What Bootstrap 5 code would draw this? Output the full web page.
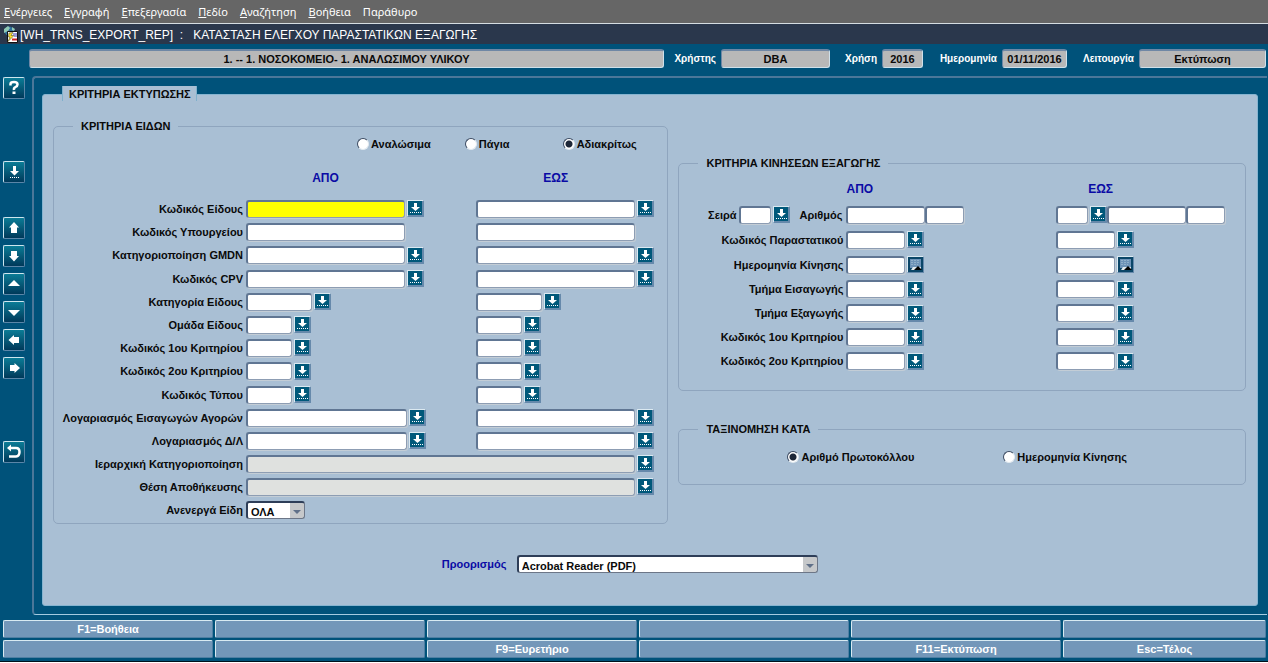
<!DOCTYPE html>
<html lang="el">
<head>
<meta charset="utf-8">
<meta name="viewport" content="width=device-width, initial-scale=1">
<title>[WH_TRNS_EXPORT_REP] : ΚΑΤΑΣΤΑΣΗ ΕΛΕΓΧΟΥ ΠΑΡΑΣΤΑΤΙΚΩΝ ΕΞΑΓΩΓΗΣ</title>
<link rel="stylesheet" href="https://cdn.jsdelivr.net/npm/bootstrap@5.3.0/dist/css/bootstrap.min.css">
<style>
:root { --sea: #00527a; --pane: #a9bfd4; --line: #8fa5be; --edge: #607693; --navy: #0a0aa5; }
body { font: bold 11px/16px "Liberation Sans", Arial, sans-serif; color: #0a0a0a; background: var(--sea); border-bottom: 1px solid #fff; }
.menu-strip { background: #666; border-bottom: 1px solid #d5dde2; height: 24px; padding-left: 4px; gap: 12px; font: 11px/24px "Noto Sans", sans-serif; }
.menu-strip a { color: #fff; text-decoration: none; }
.title-strip { background: #2a374c; color: #fff; height: 20px; padding: 2px 0 0 4px; white-space: pre; }
.title-strip h1 { font-size: 12px; line-height: 18px; }
.info-strip { padding: 5px 2px 8px 29px; }
.info-strip label { color: #fff; font-size: 10px; text-align: right; flex: none; padding-right: 5px; }
.info-strip input { height: 19px; min-width: 0; border: 1px solid #6f87a5; border-top-width: 2px; border-right-color: #cfe0ea; border-bottom-color: #cfe0ea; border-radius: 3px; background: #b8b8b8; color: #0a0a0a; font: inherit; text-align: center; padding: 0; }
.lw-user { width: 57px; } .lw-year { width: 52px; } .lw-date { width: 79px; } .lw-mode { width: 72px; }
.fw-date { width: 65px; } .fw-year { width: 41px; } .fw-user { width: 109px; } .fw-mode { width: 127px; }

.rail { width: 32px; flex: none; padding: 1px 0 0 3px; gap: 6px; }
.tool { width: 22px; height: 22px; padding: 0; border: 1px solid #cde6ee; border-right-color: #5b86a8; border-bottom-color: #5b86a8; border-radius: 2px; background: linear-gradient(#0b7c96, #00395a); display: block; }
.tool svg, .pick svg { display: block; }
.gap-2slot { margin-bottom: 56px; } .gap-1slot { margin-bottom: 28px; }

.frame { border: 2px solid #4b7799; border-right: 0; border-bottom-color: #a5cbe0; border-bottom-width: 1px; border-radius: 4px 0 0 4px; padding: 8px 9px 8px 8px; margin-right: 1px; }
.tab-cap { position: relative; z-index: 1; align-self: flex-start; margin: 0 0 -7px 20px; padding: 0 5px 0 6px; height: 15px; line-height: 16px; background: var(--pane); border: solid #7fb0cc; border-width: 0 1px; }
.sheet { background: var(--pane); border: 1px solid #86b4d0; border-radius: 3px; padding: 23px 11px 24px 10px; }
.sheet-cols { display: grid; grid-template-columns: 616fr 568fr; gap: 10px; align-items: start; }
fieldset { border: 1px solid var(--line); border-radius: 5px; }
legend { float: none; width: auto; margin: 0 0 0 19px; padding: 0 8px; font-size: 11px; line-height: 16px; height: 16px; }
.items { padding-bottom: 2px; }
.right-col { padding-top: 37px; }
.crit { padding-bottom: 17px; }
.sorting { margin-top: 30px; }
.heads { font-size: 12px; line-height: 20px; color: var(--navy); text-align: center; }
.tl { display: grid; grid-template-columns: 192px 230fr 191fr; align-items: center; height: 23px; }
.tr { display: grid; grid-template-columns: 167px 210fr 189fr; align-items: center; height: 24px; }
.tall { height: 24px; } .tr.tall { height: 25px; }
.tl > label, .tr > label { text-align: right; padding-right: 3px; white-space: nowrap; }
.cap { width: 159px; text-align: center; }
.cap-s { width: 24px; margin-left: 0; }
.left-heads { margin: 14px 0 9px; height: 20px; }
.right-heads { margin: 8px 0 3px; height: 20px; }
.span-both { grid-column: 2 / 4; padding-right: 13px; }
.cell { display: flex; align-items: center; gap: 2px; }
.tight { gap: 0; } .tight .pick { margin-left: 2px; }
.fld { height: 18px; flex: none; min-width: 0; padding: 0 2px; border: 1px solid #8d9db3; border-top: 2px solid var(--edge); border-left: 2px solid var(--edge); border-radius: 3px; background: #fff; box-shadow: 1px 1px 0 #c3cdd6; font: inherit; outline: 0; }
.fld.hot { background: #ff0; }
.fld.off { background: #dfe1df; flex: 1; }
.w-xl { width: 159px; } .w-xxl { width: 161px; } .w-m { width: 66px; } .w-s { width: 46px; } .w-c { width: 59px; } .w-n { width: 79px; } .w-i { width: 39px; } .w-ser { width: 32px; }
.pick { width: 17px; height: 17px; flex: none; padding: 0; border: 1px solid #dbe9f1; border-right-color: #6689ab; border-bottom-color: #6689ab; border-radius: 1px; background: #00587a; }
.combo { appearance: none; height: 18px; border: 1px solid #6c7687; border-top: 2px solid #2e3e58; border-left: 2px solid #2e3e58; border-radius: 3px; padding: 3px 14px 0 3px; font: inherit; line-height: 12px; color: #0a0a0a; overflow: hidden;
  background: #fff url("data:image/svg+xml,%3Csvg xmlns='http://www.w3.org/2000/svg' width='14' height='16'%3E%3Crect width='14' height='16' fill='%23c6c8ca'/%3E%3Cpath d='M3 7h8l-4 4z' fill='%23607088'/%3E%3C/svg%3E") no-repeat right top; }
.w-all { width: 59px; } .w-dest { width: 301px; }
.opts { height: 20px; }
.opts label { display: flex; align-items: center; gap: 2px; }
.opts input { appearance: none; width: 12px; height: 12px; margin: 0; border: 1px solid #3b4a61; border-right-color: #e3eaf0; border-bottom-color: #e3eaf0; border-radius: 50%; background: #fff; }
.opts input:checked { background: radial-gradient(circle, #1d2738 0 3px, #fff 4px); }
.kind-opts { display: grid; grid-template-columns: 108fr 98fr 105fr; padding-left: 303px; }
.sort-opts { display: grid; grid-template-columns: 216fr 242fr; padding-left: 108px; margin-top: 10px; }
.dest { padding-left: calc(33% - 5px); margin-top: 31px; }
.dest label { color: var(--navy); width: 75px; }

.keys { display: grid; grid-template-columns: repeat(5, 210fr) 203fr; gap: 2px; padding: 5px 2px 3px 3px; border-bottom: 1px solid #00111c; }
.keys button { height: 18px; padding: 0; border: 1px solid #d8eaf2; border-right-color: #4f7fa3; border-bottom-color: #4f7fa3; border-radius: 2px; background: #7397b9; color: #fff; font: inherit; line-height: 16px; }
</style>
<script src="https://cdn.jsdelivr.net/npm/bootstrap@5.3.0/dist/js/bootstrap.bundle.min.js"></script>
</head>
<body class="d-flex flex-column min-vh-100">
<svg width="0" height="0" class="position-absolute" aria-hidden="true">
  <symbol id="lov" viewBox="0 0 15 15"><rect width="15" height="15" fill="#00587a"/><path d="M0 15v-1h14V0h1v15z" fill="#6689ab"/><path d="M6 2h3v4h3L7.500 10 3 6h3z" fill="#fff"/><path d="M2 11.500h11" stroke="#fff" stroke-dasharray="1 1"/></symbol>
  <symbol id="cal" viewBox="0 0 15 15"><rect width="15" height="15" fill="#0b4668"/><rect x="2" y="2" width="11" height="9" fill="#6d93b8"/><path d="M3 3.500h9M3 5.500h9M3 7.500h7" stroke="#8fafca" stroke-dasharray="2 1"/><path d="M3 13l2-3h8v3z" fill="#e2eaee"/><path d="M6 13l4-4 4 4z" fill="#000"/></symbol>
</svg>

<nav class="menu-strip d-flex">
  <a href="#"><u>Ε</u>νέργειες</a><a href="#"><u>Ε</u>γγραφή</a><a href="#"><u>Ε</u>πεξεργασία</a><a href="#"><u>Π</u>εδίο</a><a href="#"><u>Α</u>ναζήτηση</a><a href="#"><u>Β</u>οήθεια</a><a href="#">Παράθυρο</a>
</nav>
<header class="title-strip d-flex align-items-center"><svg width="16" height="18" viewBox="0 0 16 18" aria-hidden="true"><circle cx="5" cy="5" r="4.500" fill="#2c6f9e"/><path d="M0 3l4-3 2 2-2 3-4 2zM8 1l3 2-1 2-2-1z" fill="#8fc9b4"/><path d="M3.500 5.500h10v11h-10z" fill="#fff" stroke="#111"/><path d="M5 7l4-.5-2 3h3l-6 6 2-4.500H4.500z" fill="#ffdf2c" stroke="#553" stroke-width=".6"/><path d="M9 8h4M10 10h3" stroke="#3333b5"/><path d="M8 13.500h5" stroke="#c22" stroke-width="2"/></svg><h1 class="m-0 fw-normal">[WH_TRNS_EXPORT_REP]  :   ΚΑΤΑΣΤΑΣΗ ΕΛΕΓΧΟΥ ΠΑΡΑΣΤΑΤΙΚΩΝ ΕΞΑΓΩΓΗΣ</h1></header>

<section class="info-strip d-flex align-items-center">
  <input class="flex-grow-1" readonly aria-label="Αποθήκη" value="1. -- 1. ΝΟΣΟΚΟΜΕΙΟ- 1. ΑΝΑΛΩΣΙΜΟΥ ΥΛΙΚΟΥ">
  <label class="lw-user" for="usr">Χρήστης</label><input id="usr" class="fw-user" readonly value="DBA">
  <label class="lw-year" for="yr">Χρήση</label><input id="yr" class="fw-year" readonly value="2016">
  <label class="lw-date" for="dt">Ημερομηνία</label><input id="dt" class="fw-date" readonly value="01/11/2016">
  <label class="lw-mode" for="md">Λειτουργία</label><input id="md" class="fw-mode" readonly value="Εκτύπωση">
</section>

<div class="d-flex flex-grow-1">
  <aside class="rail d-flex flex-column">
    <button class="tool gap-2slot" aria-label="Βοήθεια"><svg width="20" height="20" viewBox="0 0 20 20"><path d="M6.500 7.500V6Q6.500 4 10 4t3.500 2.500Q13.500 8 11.500 9T10 12" fill="none" stroke="#fff" stroke-width="2.500"/><path d="M8.500 13.500h3V16h-3z" fill="#fff"/></svg></button>
    <button class="tool gap-1slot" aria-label="Λίστα τιμών"><svg width="20" height="20" viewBox="0 0 20 20"><path d="M9 4h3v5h3l-4.500 4.500L6 9h3z" fill="#fff"/><path d="M6 15.500h10" stroke="#fff" stroke-dasharray="1 1"/></svg></button>
    <button class="tool" aria-label="Προηγούμενη εγγραφή"><svg width="20" height="20" viewBox="0 0 20 20"><path d="M10 4l5 5.500h-2V15H7V9.500H5z" fill="#fff"/></svg></button>
    <button class="tool" aria-label="Επόμενη εγγραφή"><svg width="20" height="20" viewBox="0 0 20 20"><path d="M10 15.500l5-5.500h-2V5H7v5H5z" fill="#fff"/></svg></button>
    <button class="tool" aria-label="Προηγούμενο μπλοκ"><svg width="20" height="20" viewBox="0 0 20 20"><path d="M10 6l6 6H4z" fill="#fff"/></svg></button>
    <button class="tool" aria-label="Επόμενο μπλοκ"><svg width="20" height="20" viewBox="0 0 20 20"><path d="M10 14L4 8h12z" fill="#fff"/></svg></button>
    <button class="tool" aria-label="Προηγούμενο πεδίο"><svg width="20" height="20" viewBox="0 0 20 20"><path d="M4.500 10L10 5v2h5v6h-5v2z" fill="#fff"/></svg></button>
    <button class="tool gap-2slot" aria-label="Επόμενο πεδίο"><svg width="20" height="20" viewBox="0 0 20 20"><path d="M16 10l-5.500-5v2H6v6h4.500v2z" fill="#fff"/></svg></button>
    <button class="tool" aria-label="Έξοδος"><svg width="20" height="20" viewBox="0 0 20 20"><path d="M3 6l4-3.500v7z" fill="#fff"/><path d="M6 6h6q3.500 0 3.500 4t-3.500 4.500H5" fill="none" stroke="#fff" stroke-width="2.500"/></svg></button>
  </aside>

  <main class="frame d-flex flex-column flex-grow-1">
    <div class="tab-cap">ΚΡΙΤΗΡΙΑ ΕΚΤΥΠΩΣΗΣ</div>
    <form class="sheet flex-grow-1">
      <div class="sheet-cols">
        <fieldset class="items">
          <legend>ΚΡΙΤΗΡΙΑ ΕΙΔΩΝ</legend>
          <div class="opts kind-opts">
            <label><input type="radio" name="kind">Αναλώσιμα</label>
            <label><input type="radio" name="kind">Πάγια</label>
            <label><input type="radio" name="kind" checked>Αδιακρίτως</label>
          </div>
          <div class="tl heads left-heads"><span></span><span class="cap">ΑΠΟ</span><span class="cap">ΕΩΣ</span></div>

          <div class="tl"><label for="a1">Κωδικός Είδους</label><div class="cell"><input id="a1" class="fld w-xl hot"><button type="button" class="pick" aria-label="Λίστα"><svg width="15" height="15"><use href="#lov"/></svg></button></div><div class="cell"><input class="fld w-xl" aria-label="Κωδικός Είδους έως"><button type="button" class="pick" aria-label="Λίστα"><svg width="15" height="15"><use href="#lov"/></svg></button></div></div>
          <div class="tl"><label for="a2">Κωδικός Υπουργείου</label><div class="cell"><input id="a2" class="fld w-xl"></div><div class="cell"><input class="fld w-xl" aria-label="Κωδικός Υπουργείου έως"></div></div>
          <div class="tl tall"><label for="a3">Κατηγοριοποίηση GMDN</label><div class="cell"><input id="a3" class="fld w-xl"><button type="button" class="pick" aria-label="Λίστα"><svg width="15" height="15"><use href="#lov"/></svg></button></div><div class="cell"><input class="fld w-xl" aria-label="Κατηγοριοποίηση GMDN έως"><button type="button" class="pick" aria-label="Λίστα"><svg width="15" height="15"><use href="#lov"/></svg></button></div></div>
          <div class="tl"><label for="a4">Κωδικός CPV</label><div class="cell"><input id="a4" class="fld w-xl"><button type="button" class="pick" aria-label="Λίστα"><svg width="15" height="15"><use href="#lov"/></svg></button></div><div class="cell"><input class="fld w-xl" aria-label="Κωδικός CPV έως"><button type="button" class="pick" aria-label="Λίστα"><svg width="15" height="15"><use href="#lov"/></svg></button></div></div>
          <div class="tl"><label for="a5">Κατηγορία Είδους</label><div class="cell"><input id="a5" class="fld w-m"><button type="button" class="pick" aria-label="Λίστα"><svg width="15" height="15"><use href="#lov"/></svg></button></div><div class="cell"><input class="fld w-m" aria-label="Κατηγορία Είδους έως"><button type="button" class="pick" aria-label="Λίστα"><svg width="15" height="15"><use href="#lov"/></svg></button></div></div>
          <div class="tl"><label for="a6">Ομάδα Είδους</label><div class="cell"><input id="a6" class="fld w-s"><button type="button" class="pick" aria-label="Λίστα"><svg width="15" height="15"><use href="#lov"/></svg></button></div><div class="cell"><input class="fld w-s" aria-label="Ομάδα Είδους έως"><button type="button" class="pick" aria-label="Λίστα"><svg width="15" height="15"><use href="#lov"/></svg></button></div></div>
          <div class="tl"><label for="a7">Κωδικός 1ου Κριτηρίου</label><div class="cell"><input id="a7" class="fld w-s"><button type="button" class="pick" aria-label="Λίστα"><svg width="15" height="15"><use href="#lov"/></svg></button></div><div class="cell"><input class="fld w-s" aria-label="Κωδικός 1ου Κριτηρίου έως"><button type="button" class="pick" aria-label="Λίστα"><svg width="15" height="15"><use href="#lov"/></svg></button></div></div>
          <div class="tl tall"><label for="a8">Κωδικός 2ου Κριτηρίου</label><div class="cell"><input id="a8" class="fld w-s"><button type="button" class="pick" aria-label="Λίστα"><svg width="15" height="15"><use href="#lov"/></svg></button></div><div class="cell"><input class="fld w-s" aria-label="Κωδικός 2ου Κριτηρίου έως"><button type="button" class="pick" aria-label="Λίστα"><svg width="15" height="15"><use href="#lov"/></svg></button></div></div>
          <div class="tl"><label for="a9">Κωδικός Τύπου</label><div class="cell"><input id="a9" class="fld w-s"><button type="button" class="pick" aria-label="Λίστα"><svg width="15" height="15"><use href="#lov"/></svg></button></div><div class="cell"><input class="fld w-s" aria-label="Κωδικός Τύπου έως"><button type="button" class="pick" aria-label="Λίστα"><svg width="15" height="15"><use href="#lov"/></svg></button></div></div>
          <div class="tl"><label for="a10">Λογαριασμός Εισαγωγών Αγορών</label><div class="cell"><input id="a10" class="fld w-xxl"><button type="button" class="pick" aria-label="Λίστα"><svg width="15" height="15"><use href="#lov"/></svg></button></div><div class="cell"><input class="fld w-xl" aria-label="Λογαριασμός Εισαγωγών Αγορών έως"><button type="button" class="pick" aria-label="Λίστα"><svg width="15" height="15"><use href="#lov"/></svg></button></div></div>
          <div class="tl"><label for="a11">Λογαριασμός Δ/Λ</label><div class="cell"><input id="a11" class="fld w-xxl"><button type="button" class="pick" aria-label="Λίστα"><svg width="15" height="15"><use href="#lov"/></svg></button></div><div class="cell"><input class="fld w-xl" aria-label="Λογαριασμός Δ/Λ έως"><button type="button" class="pick" aria-label="Λίστα"><svg width="15" height="15"><use href="#lov"/></svg></button></div></div>
          <div class="tl"><label for="a12">Ιεραρχική Κατηγοριοποίηση</label><div class="cell span-both"><input id="a12" class="fld off" readonly><button type="button" class="pick" aria-label="Λίστα"><svg width="15" height="15"><use href="#lov"/></svg></button></div></div>
          <div class="tl"><label for="a13">Θέση Αποθήκευσης</label><div class="cell span-both"><input id="a13" class="fld off" readonly><button type="button" class="pick" aria-label="Λίστα"><svg width="15" height="15"><use href="#lov"/></svg></button></div></div>
          <div class="tl"><label for="a14">Ανενεργά Είδη</label><div class="cell"><select id="a14" class="combo w-all"><option>ΟΛΑ</option></select></div></div>
        </fieldset>

        <div class="right-col">
          <fieldset class="crit">
            <legend>ΚΡΙΤΗΡΙΑ ΚΙΝΗΣΕΩΝ ΕΞΑΓΩΓΗΣ</legend>
            <div class="tr heads right-heads"><span></span><span class="cap-s">ΑΠΟ</span><span class="cap-s w-auto text-start ps-4 ms-2">ΕΩΣ</span></div>
            <div class="tr tall"><div class="cell justify-content-end"><label for="b0">Σειρά</label><input id="b0" class="fld w-ser"><button type="button" class="pick" aria-label="Λίστα"><svg width="15" height="15"><use href="#lov"/></svg></button><label for="b1" class="ps-2 pe-1">Αριθμός</label></div><div class="cell tight"><input id="b1" class="fld w-n"><input class="fld w-i" aria-label="Αριθμός, συμπλήρωμα"></div><div class="cell tight"><input class="fld w-ser" aria-label="Σειρά έως"><button type="button" class="pick" aria-label="Λίστα"><svg width="15" height="15"><use href="#lov"/></svg></button><input class="fld w-n" aria-label="Αριθμός έως"><input class="fld w-i" aria-label="Αριθμός έως, συμπλήρωμα"></div></div>
            <div class="tr tall"><label for="b2">Κωδικός Παραστατικού</label><div class="cell"><input id="b2" class="fld w-c"><button type="button" class="pick" aria-label="Λίστα"><svg width="15" height="15"><use href="#lov"/></svg></button></div><div class="cell"><input class="fld w-c" aria-label="Κωδικός Παραστατικού έως"><button type="button" class="pick" aria-label="Λίστα"><svg width="15" height="15"><use href="#lov"/></svg></button></div></div>
            <div class="tr tall"><label for="b3">Ημερομηνία Κίνησης</label><div class="cell"><input id="b3" class="fld w-c"><button type="button" class="pick" aria-label="Ημερολόγιο"><svg width="15" height="15"><use href="#cal"/></svg></button></div><div class="cell"><input class="fld w-c" aria-label="Ημερομηνία Κίνησης έως"><button type="button" class="pick" aria-label="Ημερολόγιο"><svg width="15" height="15"><use href="#cal"/></svg></button></div></div>
            <div class="tr"><label for="b4">Τμήμα Εισαγωγής</label><div class="cell"><input id="b4" class="fld w-c"><button type="button" class="pick" aria-label="Λίστα"><svg width="15" height="15"><use href="#lov"/></svg></button></div><div class="cell"><input class="fld w-c" aria-label="Τμήμα Εισαγωγής έως"><button type="button" class="pick" aria-label="Λίστα"><svg width="15" height="15"><use href="#lov"/></svg></button></div></div>
            <div class="tr"><label for="b5">Τμήμα Εξαγωγής</label><div class="cell"><input id="b5" class="fld w-c"><button type="button" class="pick" aria-label="Λίστα"><svg width="15" height="15"><use href="#lov"/></svg></button></div><div class="cell"><input class="fld w-c" aria-label="Τμήμα Εξαγωγής έως"><button type="button" class="pick" aria-label="Λίστα"><svg width="15" height="15"><use href="#lov"/></svg></button></div></div>
            <div class="tr"><label for="b6">Κωδικός 1ου Κριτηρίου</label><div class="cell"><input id="b6" class="fld w-c"><button type="button" class="pick" aria-label="Λίστα"><svg width="15" height="15"><use href="#lov"/></svg></button></div><div class="cell"><input class="fld w-c" aria-label="Κωδικός 1ου Κριτηρίου έως"><button type="button" class="pick" aria-label="Λίστα"><svg width="15" height="15"><use href="#lov"/></svg></button></div></div>
            <div class="tr"><label for="b7">Κωδικός 2ου Κριτηρίου</label><div class="cell"><input id="b7" class="fld w-c"><button type="button" class="pick" aria-label="Λίστα"><svg width="15" height="15"><use href="#lov"/></svg></button></div><div class="cell"><input class="fld w-c" aria-label="Κωδικός 2ου Κριτηρίου έως"><button type="button" class="pick" aria-label="Λίστα"><svg width="15" height="15"><use href="#lov"/></svg></button></div></div>
          </fieldset>

          <fieldset class="crit sorting">
            <legend>ΤΑΞΙΝΟΜΗΣΗ ΚΑΤΑ</legend>
            <div class="opts sort-opts">
              <label><input type="radio" name="sort" checked>Αριθμό Πρωτοκόλλου</label>
              <label><input type="radio" name="sort">Ημερομηνία Κίνησης</label>
            </div>
          </fieldset>
        </div>
      </div>

      <div class="dest d-flex align-items-center">
        <label for="dest">Προορισμός</label>
        <select id="dest" class="combo w-dest"><option>Acrobat Reader (PDF)</option></select>
      </div>
    </form>
  </main>
</div>

<footer class="keys">
  <button>F1=Βοήθεια</button><button></button><button></button><button></button><button></button><button></button>
  <button></button><button></button><button>F9=Ευρετήριο</button><button></button><button>F11=Εκτύπωση</button><button>Esc=Τέλος</button>
</footer>
</body>
</html>
